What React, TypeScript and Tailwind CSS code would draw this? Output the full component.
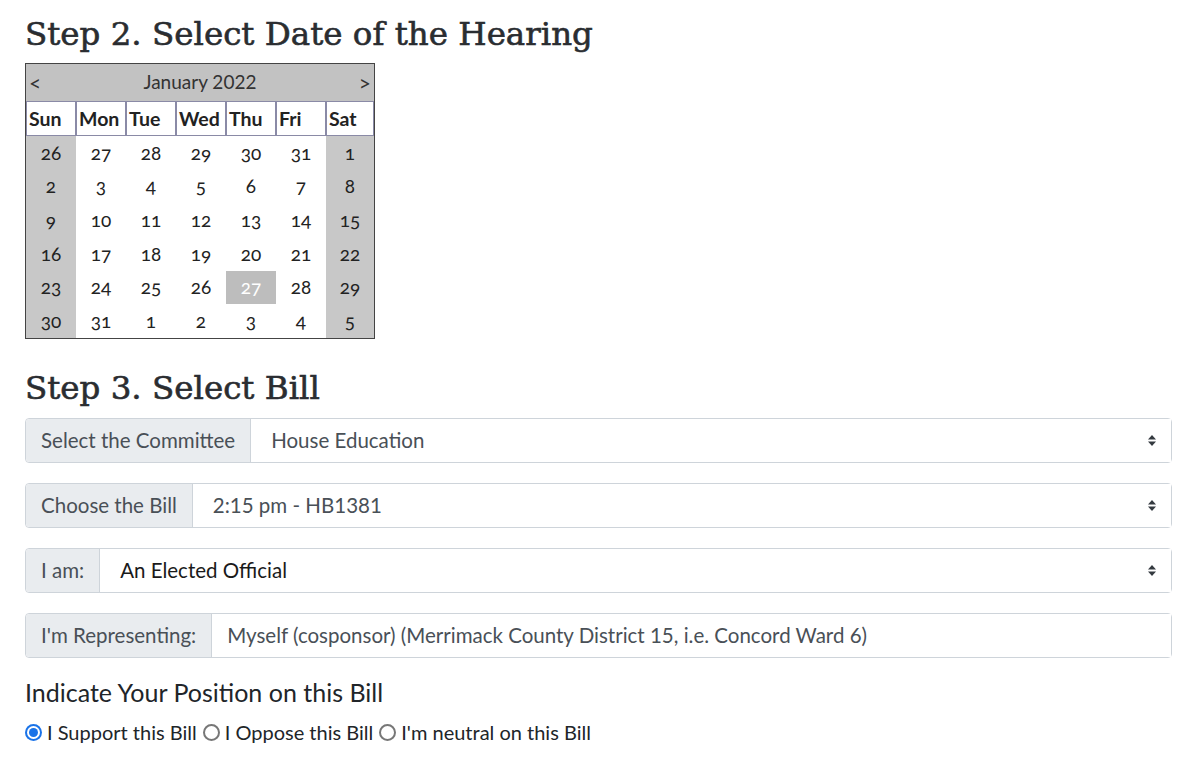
import React from "react";

const weeks: number[][] = [
  [26, 27, 28, 29, 30, 31, 1],
  [2, 3, 4, 5, 6, 7, 8],
  [9, 10, 11, 12, 13, 14, 15],
  [16, 17, 18, 19, 20, 21, 22],
  [23, 24, 25, 26, 27, 28, 29],
  [30, 31, 1, 2, 3, 4, 5],
];

const dayNames = ["Sun", "Mon", "Tue", "Wed", "Thu", "Fri", "Sat"];

const SelectArrows = () => (
  <svg width="10" height="13" viewBox="0 0 10 13" className="shrink-0">
    <path d="M5 1 L9 5.5 H1 Z" fill="#343a40" />
    <path d="M5 12 L9 7.5 H1 Z" fill="#343a40" />
  </svg>
);

const Calendar = () => (
  <div className="w-[350px] border border-[#444] font-['Lato',sans-serif] text-[#222]">
    {/* month header */}
    <div className="flex h-[37px] items-center justify-between bg-[#c2c2c2] px-[3px] text-[19px] text-[#333]">
      <span className="text-[21px]">&lt;</span>
      <span>January 2022</span>
      <span className="text-[21px]">&gt;</span>
    </div>
    <div className="grid grid-cols-[50px_50px_50px_50px_50px_50px_48px]">
      {dayNames.map((d) => (
        <div
          key={d}
          className="h-[35px] border border-[#8a8aa6] bg-white pl-[2px] text-[19.5px] font-bold leading-[33px]"
        >
          {d}
        </div>
      ))}
    </div>
    <div className="grid grid-cols-[50px_50px_50px_50px_50px_50px_48px]">
      {weeks.map((w, wi) =>
        w.map((n, di) => {
          const weekend = di === 0 || di === 6;
          const selected = wi === 4 && di === 4;
          return (
            <div
              key={`${wi}-${di}`}
              className={
                "flex h-[33.7px] items-center justify-center text-[19px] oldstyle-nums " +
                (selected
                  ? "bg-[#bdbdbd] text-white"
                  : weekend
                  ? "bg-[#c8c8c8]"
                  : "bg-white")
              }
            >
              {n}
            </div>
          );
        })
      )}
    </div>
  </div>
);

const Group = ({
  label,
  value,
  select,
  dark,
}: {
  label: string;
  value: string;
  select?: boolean;
  dark?: boolean;
}) => (
  <div className="flex h-[45px] w-full rounded-[4px] border border-[#ced4da] text-[20.5px]">
    <div className="flex items-center rounded-l-[4px] border-r border-[#ced4da] bg-[#e9ecef] px-[15px] text-[#495057]">
      {label}
    </div>
    <div
      className={
        "flex flex-1 items-center justify-between bg-white pr-[14px] " +
        (select ? "pl-[20px] " : "pl-[15px] ") +
        (dark ? "text-[#1a1a1a]" : "text-[#495057]")
      }
    >
      <span>{value}</span>
      {select && <SelectArrows />}
    </div>
  </div>
);

const Radio = ({ checked, label }: { checked?: boolean; label: string }) => (
  <label className="flex items-center">
    {checked ? (
      <span className="flex h-[17px] w-[17px] items-center justify-center rounded-full bg-[#1a73e8]">
        <span className="flex h-[13px] w-[13px] items-center justify-center rounded-full bg-white">
          <span className="h-[9px] w-[9px] rounded-full bg-[#1a73e8]" />
        </span>
      </span>
    ) : (
      <span className="h-[17px] w-[17px] rounded-full border-2 border-[#777]" />
    )}
    <span className="ml-[5px]">{label}</span>
  </label>
);

export default function App() {
  return (
    <div className="min-h-[763px] bg-white px-[25px] pt-[12px] font-['Lato',sans-serif] text-[#212529]">
      <h2 className="font-['DejaVu_Serif',serif] text-[32.5px] font-normal leading-[44px] text-[#2a2d31] [-webkit-text-stroke:0.6px_#2a2d31]">
        Step 2. Select Date of the Hearing
      </h2>
      <div className="mt-[7px]">
        <Calendar />
      </div>
      <h2 className="mt-[27px] font-['DejaVu_Serif',serif] text-[32.5px] font-normal leading-[44px] text-[#2a2d31] [-webkit-text-stroke:0.6px_#2a2d31]">
        Step 3. Select Bill
      </h2>
      <div className="mt-[8px] flex w-[1147px] flex-col gap-[20px]">
        <Group label="Select the Committee" value="House Education" select />
        <Group label="Choose the Bill" value="2:15 pm - HB1381" select />
        <Group label="I am:" value="An Elected Official" select dark />
        <Group
          label="I'm Representing:"
          value="Myself (cosponsor) (Merrimack County District 15, i.e. Concord Ward 6)"
        />
      </div>
      <div className="mt-[18px] text-[25px] leading-[32px]">
        Indicate Your Position on this Bill
      </div>
      <div className="mt-[9px] flex items-center gap-[6px] text-[20px]">
        <Radio checked label="I Support this Bill" />
        <Radio label="I Oppose this Bill" />
        <Radio label="I'm neutral on this Bill" />
      </div>
    </div>
  );
}
